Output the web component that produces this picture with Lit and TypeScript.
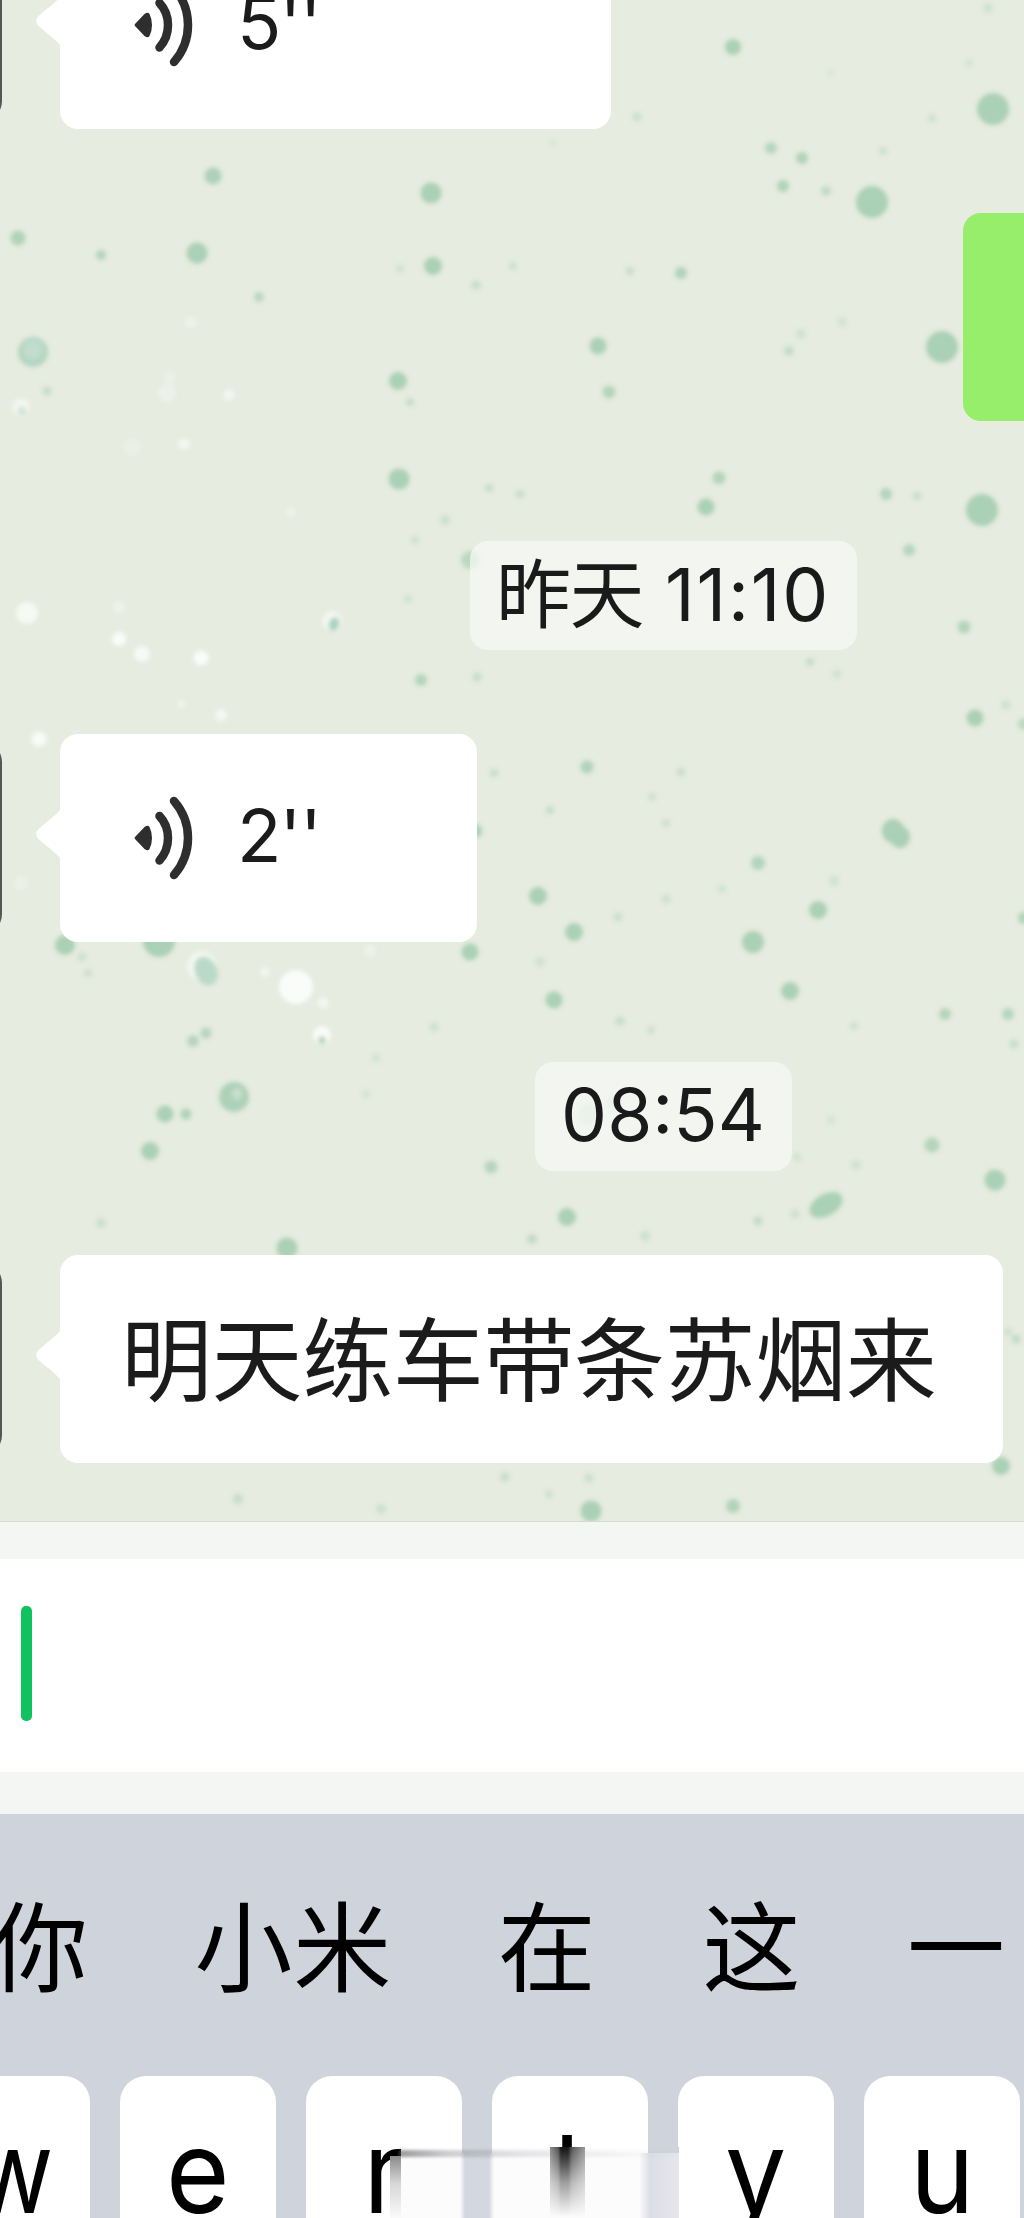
import { LitElement, html, svg, css } from "lit";
import { customElement, property } from "lit/decorators.js";

// Wallpaper speckles: x, y, radius, opacity
const GREEN: number[][] = [
  [733,47,8,1],[993,109,16,1],[872,202,16,1],[771,148,6,.8],[802,158,6,.9],[783,186,6,.9],[826,191,5,.6],
  [883,151,4,.4],[932,118,4,.4],[637,117,4.5,.45],[553,143,3,.25],[969,63,4,.3],[988,8,5,.35],[830,73,3,.25],
  [213,176,8.5,.95],[431,193,10.5,1],[197,253,10.5,1],[18,238,7.5,.9],[101,255,5,.85],[259,297,5,.75],
  [433,266,9,1],[400,269,4,.35],[476,285,4.5,.5],[513,266,4,.4],[630,271,4,.5],[681,273,6,.9],
  [598,346,8.5,1],[609,392,6.5,.85],[398,381,9,1],[410,402,4,.5],[942,347,16,1],[842,322,4.5,.35],
  [801,334,4.5,.4],[789,351,5,.55],[399,479,10.5,1],[489,488,4,.5],[520,494,4,.5],[719,478,6.5,.85],
  [706,507,8.5,1],[886,494,6,.85],[917,496,4,.5],[982,510,16,1],[47,391,4.5,.5],[22,411,4,.5],
  [445,520,5,.4],[415,540,4,.4],[408,599,4,.35],[470,560,9,.7],[909,550,6,.8],[964,627,6.5,.85],
  [975,718,8.5,1],[1006,705,4.5,.4],[1024,724,6,.7],[810,662,4,.5],[837,674,4.5,.35],[421,680,6,.85],
  [477,677,4.5,.5],[587,767,6.5,.9],[494,773,4,.5],[681,772,4,.5],[652,797,4,.4],[550,810,4,.5],
  [666,823,4,.4],[475,831,7,1],[758,863,7,.85],[834,881,5,.35],[538,896,9,1],[722,889,4,.35],[666,899,4.5,.4],
  [818,910,9,1],[618,917,4.5,.45],[574,932,9,1],[753,942,11,1],[1024,918,6,.9],[470,952,8.5,1],
  [540,962,4.5,.4],[554,1000,8.5,1],[790,991,9,1],[945,1014,6,.85],[1008,1014,6,.8],[65,945,10,1],
  [159,941,16,1],[82,957,4.5,.4],[88,973,4,.4],[620,1021,4.5,.5],[651,1030,4,.4],[434,1027,4.5,.4],
  [854,1026,4,.4],[1014,1044,4.5,.5],[376,1058,4,.35],[366,1094,4,.3],[206,1033,5.5,.8],[193,1041,6,.8],
  [234,1097,15,.95],[165,1114,8.5,1],[186,1114,5.5,.9],[150,1151,9,1],[491,1167,6.5,.8],[932,1145,7.5,.85],
  [995,1180,10.5,1],[797,1157,4,.35],[856,1165,5,.35],[831,1120,4,.3],[795,1214,4.5,.4],[758,1221,4.5,.6],
  [645,1236,5,.4],[567,1217,9,1],[532,1239,5,.6],[287,1248,10.5,1],[101,1223,5,.45],[1016,1339,4.5,.6],
  [1008,1332,4,.4],[1001,1466,9,1],[505,1477,4.5,.5],[589,1478,4.5,.45],[549,1494,4,.4],[238,1499,5,.5],
  [381,1509,5,.4],[591,1511,10.5,1],[733,1506,7,.9],[588,1114,10,.45],[614,1103,7,.35],
];
const WHITE: number[][] = [
  [191,322,6,.4],[229,395,6,.6],[167,393,9,.35],[170,378,6,.3],[184,444,6,.6],[132,447,9,.25],[21,407,9,.55],
  [291,512,5,.4],[27,613,11,.75],[119,639,7,.95],[142,654,8,.8],[201,658,7.5,.95],[119,607,6,.4],[221,715,6,.7],
  [181,704,4,.5],[39,739,7.5,.9],[296,987,17,.95],[323,1003,6,.6],[265,972,4.5,.6],[370,951,6,.4],[21,883,7,.3],
  [332,621,10,.6],[322,1035,9,.9],[202,966,15,.6],
];

const dots = (list: number[][], fill: string) =>
  list.map(([x, y, r, o]) => svg`<circle cx=${x} cy=${y} r=${r} fill=${fill} opacity=${o}></circle>`);

@customElement("chat-wallpaper")
class ChatWallpaper extends LitElement {
  static styles = css`
    :host { position: absolute; inset: 0; display: block; }
    .canvas { display: block; width: 1024px; height: 1521px; }
  `;
  render() {
    return html`<svg class="canvas" viewBox="0 0 1024 1521" aria-hidden="true">
      <defs><filter id="soft" x="0" y="0" width="1024" height="1521" filterUnits="userSpaceOnUse">
        <feGaussianBlur stdDeviation="1.9"></feGaussianBlur></filter></defs>
      <g filter="url(#soft)">
        ${dots(WHITE, "#fbfdfb")}
        ${dots(GREEN, "#aad0b5")}
        <circle cx="33" cy="352" r="15" fill="#b3d5c0"></circle>
        <circle cx="33" cy="350" r="10" fill="#c0ddcd"></circle>
        <ellipse cx="206" cy="971" rx="11" ry="15" fill="#badac7" transform="rotate(-25 206 971)"></ellipse>
        <ellipse cx="334" cy="624" rx="5" ry="7" fill="#a9d2c0" transform="rotate(20 334 624)"></ellipse>
        <ellipse cx="893" cy="831" rx="11" ry="12" fill="#aad0b5"></ellipse>
        <ellipse cx="900" cy="837" rx="10" ry="11" fill="#aad0b5"></ellipse>
        <ellipse cx="826" cy="1205" rx="18" ry="11" fill="#aad0b5" transform="rotate(-30 826 1205)"></ellipse>
        <ellipse cx="237" cy="1094" rx="5" ry="6" fill="#c6dfcd"></ellipse>
        <circle cx="322" cy="1040" r="3.5" fill="#aad0b5"></circle>
      </g>
    </svg>`;
  }
}

@customElement("chat-bubble")
class ChatBubble extends LitElement {
  @property({ type: Number }) width = 416;
  static styles = css`
    :host { display: flex; flex: none; height: 208px; margin-left: -206px; }
    .avatar { flex: none; width: 207.5px; height: 192px; margin-top: 8px; border-radius: 20px; background: #555753; }
    .tail { flex: none; width: 26px; height: 54px; margin: 73px 0 0 33.5px; }
    .body { flex: none; box-sizing: border-box; display: flex; align-items: center; margin-left: -1px;
      background: #fff; border-radius: 18px; padding-left: 64px; }
  `;
  render() {
    return html`<div class="avatar"></div>
      <svg class="tail" viewBox="0 0 26 54"><path fill="#fff" d="M26 0 C25 5 20 8 13 14 L3.500 22 Q-1 27 3.500 32 L13 40 C20 46 25 49 26 54Z"></path></svg>
      <div class="body" style="width:${this.width}px"><slot></slot></div>`;
  }
}

@customElement("voice-note")
class VoiceNote extends LitElement {
  @property() seconds = "";
  static styles = css`
    :host { display: flex; align-items: center; padding-left: 10px; }
    .waves { flex: none; width: 60px; height: 86px; }
    .secs { margin-left: 43px; padding-bottom: 4px; font: 400 73px/90px Inter, "Liberation Sans", sans-serif;
      color: #1b1b1b; white-space: nowrap; }
    .ticks { letter-spacing: -1.5px; margin-left: -2px; }
  `;
  render() {
    return html`<svg class="waves" viewBox="0 0 60 86" fill="none" stroke="#2e2e2e" stroke-width="8.500">
        <path d="M1 42 L10.500 32 Q14 29.500 15.500 32 Q18 37 18 43 Q18 49 15.500 54 Q14 56.500 10.500 54 L1 44 Q0 43 1 42Z" fill="#2e2e2e" stroke="none"></path>
        <path d="M25.500 21 Q34 30 34 43 Q34 56 25.500 65.500" stroke-linecap="round"></path>
        <path d="M40 6 Q54 22 54 43 Q54 64 40 80" stroke-linecap="round"></path>
      </svg><span class="secs">${this.seconds}<span class="ticks">''</span></span>`;
  }
}

@customElement("app-root")
class AppRoot extends LitElement {
  static styles = css`
    :host { display: block; width: 1024px; height: 2218px; overflow: hidden; background: #cfd3dc;
      font-family: Inter, "Noto Sans CJK SC", sans-serif; }
    .chat { position: relative; box-sizing: border-box; height: 1521px; overflow: hidden; background: #e6ecdf; }
    .rows { position: relative; box-sizing: border-box; height: 1521px; display: flex; flex-direction: column;
      justify-content: flex-end; gap: 84px; padding-bottom: 58px; }
    .mine { flex: none; height: 208px; width: 400px; margin-left: 963px; border-radius: 18px; background: #96ee6a; }
    .time { flex: none; display: flex; justify-content: center; width: 1326px; margin-top: 36px; }
    .pill { box-sizing: border-box; height: 109px; display: flex; align-items: center; justify-content: center;
      border-radius: 18px; background: rgba(246, 250, 246, .7); color: #1a1a1a; font-size: 73px;
      line-height: 90px; white-space: pre; }
    .long { width: 387px; }
    .short { width: 257px; padding-bottom: 4px; }
    .day { font: 400 75px/90px "Noto Sans CJK SC", sans-serif; letter-spacing: -1.5px; padding-bottom: 11px; }
    .clock { margin-left: 22px; letter-spacing: 1.8px; padding-bottom: 2px; }
    .cjk { font: 400 91px/120px "Noto Sans CJK SC", sans-serif; color: #1b1b1b; white-space: nowrap;
      letter-spacing: -.4px; margin-left: -3px; padding-bottom: 11px; }
    .bar { box-sizing: border-box; height: 293px; padding: 37px 0 42px; background: #f4f6f3;
      border-top: 1px solid #d6dad3; }
    .field { box-sizing: border-box; height: 213px; background: #fff; padding: 47px 0 0 20.5px; }
    .caret { width: 11px; height: 115px; border-radius: 5px; background: #10c160; }
    .cands { box-sizing: border-box; height: 262px; display: flex; align-items: center; gap: 106px;
      margin-left: -10px; padding-bottom: 8px; font: 400 98px/140px "Noto Sans CJK SC", sans-serif; color: #000;
      white-space: nowrap; }
    .word { letter-spacing: .6px; }
    .keys { position: relative; display: flex; gap: 30px; height: 142px; margin-left: -66px; overflow: hidden; }
    .key { box-sizing: border-box; flex: none; width: 156px; height: 220px; border-radius: 26px; background: #fff;
      text-align: center; font: 400 116px/140px Inter, "Liberation Sans", sans-serif; color: #000; padding-top: 25px; }
    .cap { display: inline-block; transform: scaleX(.94); }
    .cap.w { transform: scaleX(.86); }
    .mask { position: absolute; left: 467px; top: 71px; width: 278px; height: 71px;
      background: linear-gradient(90deg, #fff 0 61px, #cfd3dc 61px 91px, #fff 91px 247px, #cfd3dc 247px); }
    .veil { position: absolute; left: 467px; top: 77px; width: 278px; height: 65px;
      background: linear-gradient(90deg, #fcfcfd 0 59px, #d3d7e0 64px 88px, #fcfcfd 93px 238px, #dcdee6 249px, #e6e7ec 278px); }
    .streak { position: absolute; left: 465px; top: 74px; width: 278px; height: 7px; filter: blur(1.6px);
      background: linear-gradient(90deg, rgba(90,90,92,.6), rgba(120,120,124,.35) 50px, rgba(140,140,146,.2) 130px, rgba(170,170,180,.03) 260px); }
    .rsmear { position: absolute; left: 456px; top: 80px; width: 11px; height: 62px;
      background: linear-gradient(#8a8a8a, #d8d8d8 45%, #fafafa); }
    .tsmear { position: absolute; left: 616px; top: 71px; width: 35px; height: 71px;
      background: linear-gradient(rgba(252,252,253,0), rgba(252,252,253,.6) 50%, #fbfbfb 98%),
        linear-gradient(90deg, #8a8a8a 0, #555 8px, #111 11px 18px, #555 22px, #808080 30px, #999 35px); }
  `;
  render() {
    return html`
      <section class="chat">
        <chat-wallpaper></chat-wallpaper>
        <div class="rows">
          <chat-bubble .width=${551}><voice-note seconds="5"></voice-note></chat-bubble>
          <div class="mine"></div>
          <div class="time"><div class="pill long"><span class="day">昨天</span><span class="clock">11:10</span></div></div>
          <chat-bubble .width=${416.5}><voice-note seconds="2"></voice-note></chat-bubble>
          <div class="time"><div class="pill short"><span>08:54</span></div></div>
          <chat-bubble .width=${943}><span class="cjk">明天练车带条苏烟来</span></chat-bubble>
        </div>
      </section>
      <section class="bar"><div class="field"><div class="caret"></div></div></section>
      <section class="cands">${["你", "小米", "在", "这", "一"].map((c) => html`<span class="word">${c}</span>`)}</section>
      <section class="keys">
        ${["w", "e", "r", "t", "y", "u"].map((k) => html`<div class="key"><span class="cap ${k}">${k}</span></div>`)}
        <div class="mask"></div><div class="veil"></div><div class="streak"></div>
        <div class="rsmear"></div><div class="tsmear"></div>
      </section>`;
  }
}
